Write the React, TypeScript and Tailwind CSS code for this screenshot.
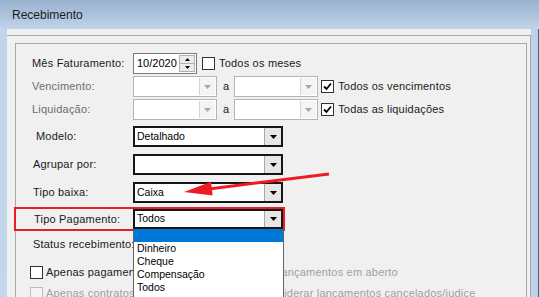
import React from "react";

const Check = ({ checked = false, disabled = false }: { checked?: boolean; disabled?: boolean }) => (
  <div
    className={`flex h-[13px] w-[13px] shrink-0 items-center justify-center border ${
      disabled ? "border-[#bcbcbc] bg-[#f4f4f4]" : "border-[#333333] bg-white"
    }`}
  >
    {checked && (
      <svg width="9" height="9" viewBox="0 0 9 9">
        <path d="M1 4.5 L3.5 7 L8 1.5" fill="none" stroke="#000" strokeWidth="1.8" />
      </svg>
    )}
  </div>
);

const Tri = ({ color = "#000" }: { color?: string }) => (
  <svg width="7" height="4" viewBox="0 0 7 4">
    <path d="M0 0 H7 L3.5 4 Z" fill={color} />
  </svg>
);

const Combo = ({ text = "", h = 21 }: { text?: string; h?: number }) => (
  <div
    className="flex w-[150px] border-2 border-[#161616] bg-white"
    style={{ height: h }}
  >
    <div className="flex flex-1 items-center pl-[2px] text-[10.5px] text-black">{text}</div>
    <div className="flex w-[17px] items-center justify-center border-l border-[#a9a9a9] bg-[#e6e6e6]">
      <Tri />
    </div>
  </div>
);

const DisCombo = () => (
  <div className="flex h-[21px] w-[84px] border border-[#b4b4b4] bg-white">
    <div className="flex-1" />
    <div className="my-[1px] mr-[1px] flex w-[16px] items-center justify-center border-l border-[#d4d4d4] bg-[#f4f4f4]">
      <Tri color="#a8a8a8" />
    </div>
  </div>
);

const Label = ({ children, disabled = false, pl = 0 }: { children: React.ReactNode; disabled?: boolean; pl?: number }) => (
  <div
    className={`w-[101px] shrink-0 whitespace-nowrap text-[11px] tracking-[0.2px] ${disabled ? "text-[#6d6d6d]" : "text-[#1a1a1a]"}`}
    style={{ paddingLeft: pl }}
  >
    {children}
  </div>
);

export default function App() {
  return (
    <div className="relative h-[297px] w-[539px] overflow-hidden bg-[#c0d5eb] font-['Liberation_Sans',Arial,sans-serif]">
      {/* Title bar */}
      <div className="flex h-[29px] items-center bg-gradient-to-b from-[#98b1ce] to-[#c0d4ea] pl-[12px] text-[12px] text-[#1b1b1b]">
        Recebimento
      </div>
      <div className="flex h-[268px]">
        <div className="w-[7px] bg-gradient-to-b from-[#c0d4ea] to-[#c3d7ed]" />
        <div className="flex-1 bg-[#f0f0f0] pt-[6px]">
          <div className="h-full border-r border-t border-[#a8a8a8] pl-[8px] pr-[3px] pt-[7px]">
            <div className="h-[260px] border border-[#a8a8a8]">
              <div className="flex flex-col pl-[16px] pt-[9px]">
                {/* Row 1 */}
                <div className="flex h-[21px] items-center">
                  <Label>Mês Faturamento:</Label>
                  <div className="flex h-[21px] w-[64px] border border-[#7a7a7a] bg-white">
                    <div className="flex flex-1 items-center pl-[3px] text-[11px] text-black">10/2020</div>
                    <div className="my-[1px] mr-[1px] flex w-[16px] flex-col">
                      <div className="flex flex-1 items-center justify-center border border-[#b0b0b0] bg-[#ececec]">
                        <svg width="5" height="3" viewBox="0 0 5 3"><path d="M0 3 H5 L2.5 0 Z" fill="#000" /></svg>
                      </div>
                      <div className="flex flex-1 items-center justify-center border border-t-0 border-[#b0b0b0] bg-[#ececec]">
                        <svg width="5" height="3" viewBox="0 0 5 3"><path d="M0 0 H5 L2.5 3 Z" fill="#000" /></svg>
                      </div>
                    </div>
                  </div>
                  <div className="ml-[5px] flex items-center gap-[4px] text-[11px] tracking-[0.2px] text-[#1a1a1a]">
                    <Check />
                    <span>Todos os meses</span>
                  </div>
                </div>
                {/* Row 2 */}
                <div className="mt-[2px] flex h-[21px] items-center">
                  <Label disabled>Vencimento:</Label>
                  <DisCombo />
                  <span className="ml-[6px] mr-[5px] text-[11px] text-[#1a1a1a]">a</span>
                  <DisCombo />
                  <div className="ml-[3px] flex items-center gap-[4px] text-[11px] tracking-[0.2px] text-[#1a1a1a]">
                    <Check checked />
                    <span>Todos os vencimentos</span>
                  </div>
                </div>
                {/* Row 3 */}
                <div className="mt-[2px] flex h-[21px] items-center">
                  <Label disabled>Liquidação:</Label>
                  <DisCombo />
                  <span className="ml-[6px] mr-[5px] text-[11px] text-[#1a1a1a]">a</span>
                  <DisCombo />
                  <div className="ml-[3px] flex items-center gap-[4px] text-[11px] tracking-[0.2px] text-[#1a1a1a]">
                    <Check checked />
                    <span>Todas as liquidações</span>
                  </div>
                </div>
                {/* Row 4 */}
                <div className="mt-[6px] flex h-[21px] items-center">
                  <Label pl={4}>Modelo:</Label>
                  <Combo text="Detalhado" />
                </div>
                {/* Row 5 */}
                <div className="mt-[7px] flex h-[21px] items-center">
                  <Label pl={1}>Agrupar por:</Label>
                  <Combo />
                </div>
                {/* Row 6 */}
                <div className="mt-[7px] flex h-[21px] items-center">
                  <Label pl={1}>Tipo baixa:</Label>
                  <Combo text="Caixa" />
                </div>
                {/* Row 7 */}
                <div className="mt-[6px] flex h-[20px] items-center">
                  <Label pl={2}>Tipo Pagamento:</Label>
                  <Combo text="Todos" h={20} />
                </div>
                {/* Row 8 */}
                <div className="mt-[7px] flex h-[16px] items-center">
                  <Label pl={1}>Status recebimento:</Label>
                </div>
                {/* Row 9 */}
                <div className="-ml-[2px] mt-[12px] flex h-[16px] items-center">
                  <div className="flex w-[207px] shrink-0 items-center gap-[3px] text-[11px] tracking-[0.2px] text-[#1a1a1a]">
                    <Check />
                    <span className="whitespace-nowrap">Apenas pagamentos</span>
                  </div>
                  <span className="whitespace-nowrap text-[11px] tracking-[0.2px] text-[#a0a0a0]">
                    Apenas lançamentos em aberto
                  </span>
                </div>
                {/* Row 10 */}
                <div className="-ml-[2px] mt-[5px] flex h-[16px] items-center">
                  <div className="flex w-[210px] shrink-0 items-center gap-[3px] text-[11px] tracking-[0.2px] text-[#a0a0a0]">
                    <Check disabled />
                    <span className="whitespace-nowrap">Apenas contratos ativos</span>
                  </div>
                  <span className="whitespace-nowrap text-[11px] tracking-[0.2px] text-[#a0a0a0]">
                    Desconsiderar lançamentos cancelados/judice
                  </span>
                </div>
              </div>
            </div>
          </div>
        </div>
        <div className="w-[8px] border-r border-[#4a5f78] bg-[#bcd2ea]" />
      </div>

      {/* Red annotation box */}
      <div className="absolute left-[14px] top-[207px] h-[24px] w-[271px] border-2 border-[#ec1c24]" />

      {/* Dropdown list */}
      <div className="absolute left-[133px] top-[229px] w-[151px] border border-t-0 border-[#646464] bg-white text-[10.5px] text-black">
        <div className="h-[13px] bg-[#0078d7]" />
        {["Dinheiro", "Cheque", "Compensação", "Todos"].map((t) => (
          <div key={t} className="flex h-[13px] items-center pl-[3px]">
            {t}
          </div>
        ))}
        <div className="h-[13px]" />
      </div>

      {/* Red arrow */}
      <svg className="pointer-events-none absolute left-0 top-0" width="539" height="297">
        <line x1="329" y1="174" x2="205" y2="189.4" stroke="#ec1c24" strokeWidth="3" />
        <polygon points="184,192 212.6,195.5 211,181.7" fill="#ec1c24" />
      </svg>
    </div>
  );
}
